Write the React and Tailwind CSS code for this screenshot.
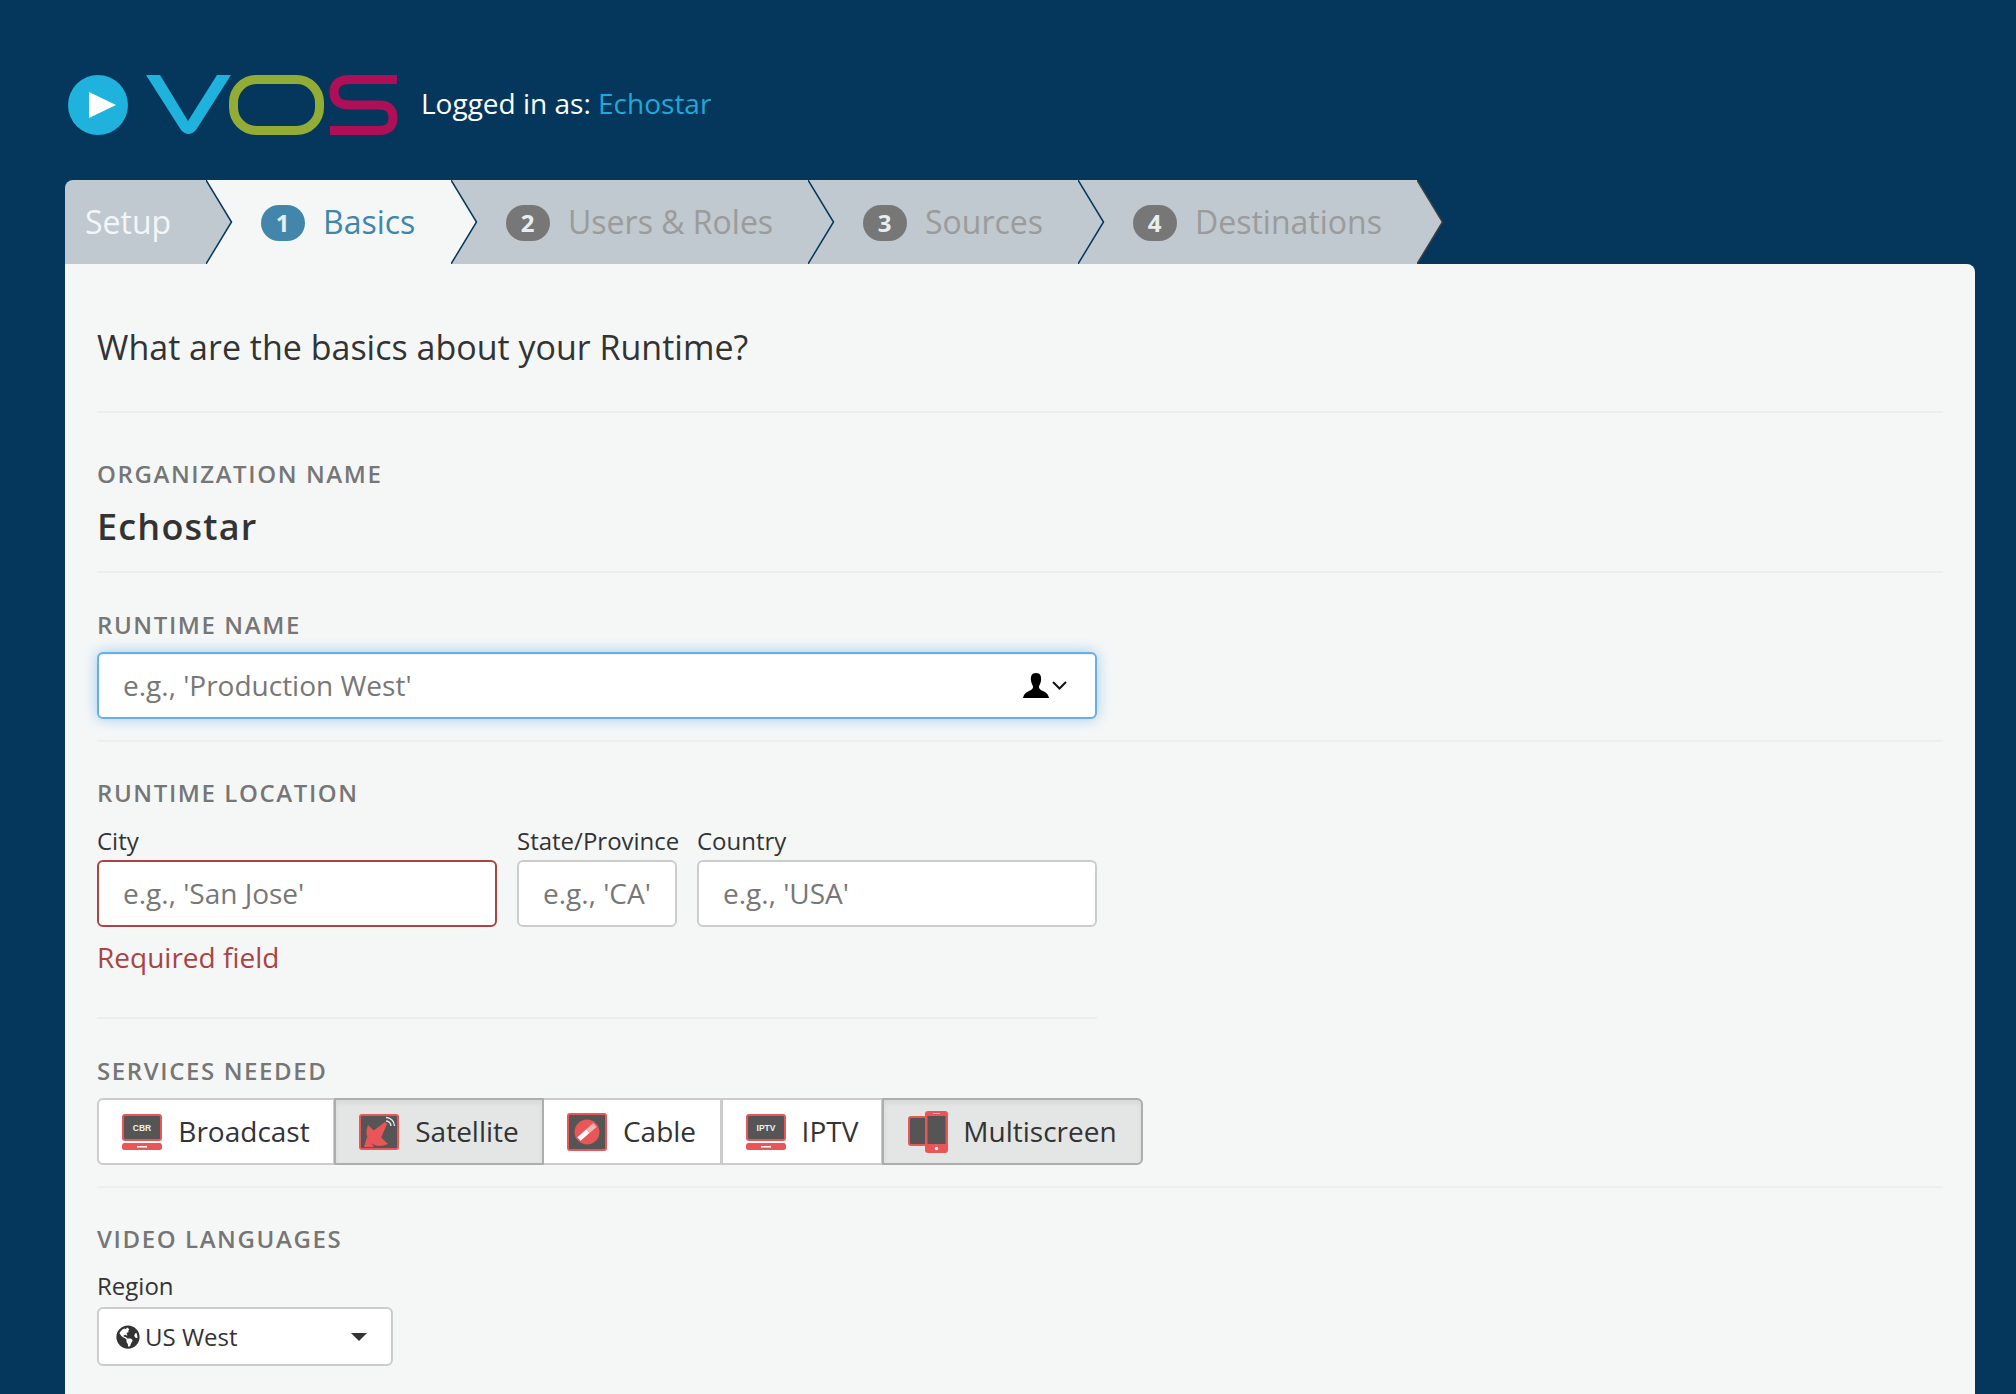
import { FaGlobeAmericas } from 'react-icons/fa'

const NAVY = '#04375b'

function Logo() {
  return (
    <svg width="330" height="60" viewBox="0 0 330 60" className="shrink-0">
      <circle cx="30" cy="30" r="30" fill="#1eb2dc" />
      <path d="M21 17 L48 30 L21 43 Z" fill="#fff" />
      <path d="M78 0 H92 L120 46 L149 0 H163 L128 55 Q120.500 63 113 55 Z" fill="#1eb2dc" />
      <rect x="165.500" y="4.500" width="86" height="51" rx="23" fill="none" stroke="#93ac36" strokeWidth="9" />
      <path d="M329 4.500 H282 Q266 4.500 266 17.500 Q266 30 282 30 H311 Q325 30 325 43 Q325 55.500 311 55.500 H262" fill="none" stroke="#ae0f57" strokeWidth="9" />
    </svg>
  )
}

function Tab({ width, number, label, active, last, first }) {
  const fill = active ? '#f5f7f7' : '#bfc9cf'
  return (
    <div
      className={`relative flex items-center h-full shrink-0 ${active ? 'bg-[#f5f7f7]' : 'bg-[#bfc9cf]'} ${first ? 'rounded-tl-lg pl-[20px]' : 'pl-[55px]'}`}
      style={{ width }}
    >
      {number ? (
        <span className={`flex items-center justify-center w-[44px] h-[36px] mt-[2px] pr-[1px] rounded-full text-[24px] font-bold text-[#e8edf0] ${active ? 'bg-[#4287ab]' : 'bg-[#777777]'}`}>
          {number}
        </span>
      ) : null}
      <span className={`text-[32px] leading-none ${number ? 'ml-[18px]' : ''} ${first ? 'text-[#f4f6f7]' : active ? 'text-[#3f86ab]' : 'text-[#9b9b9b]'}`}>
        {label}
      </span>
      <svg width="27" height="84" viewBox="0 0 27 84" className="absolute left-full top-0 z-10">
        <path d="M0 0 L25.500 42 L0 84 Z" fill={fill} />
        <path d="M0 0 L25.500 42 L0 84" fill="none" stroke={last ? '#3a3f42' : NAVY} strokeWidth="1.500" />
      </svg>
    </div>
  )
}

function SectionLabel({ children }) {
  return <div className="text-[24px] leading-[32px] font-semibold tracking-[1.6px] uppercase text-[#767676]">{children}</div>
}

function FieldLabel({ children }) {
  return <label className="block text-[24px] leading-[32px] text-[#333]">{children}</label>
}

function TextInput({ placeholder, className = '' }) {
  return (
    <input
      placeholder={placeholder}
      className={`block w-full h-[67px] px-[24px] pb-[2px] bg-white rounded-[6px] border-2 text-[28px] outline-none placeholder:text-[#777] ${className}`}
    />
  )
}

function ScreenIcon({ text }) {
  return (
    <svg width="40" height="36" viewBox="0 0 40 36">
      <rect x="1" y="1" width="38" height="25" rx="2" fill="#555" stroke="#ea5558" strokeWidth="2" />
      <text x="20" y="16.500" textAnchor="middle" fill="#eee" fontSize="8.500" fontWeight="700" fontFamily="'Liberation Sans', sans-serif">{text}</text>
      <rect x="0" y="29" width="40" height="7" rx="2.500" fill="#ea5558" />
      <rect x="15" y="32" width="10" height="1.500" fill="#fff" />
    </svg>
  )
}

function SatelliteIcon() {
  return (
    <svg width="40" height="36" viewBox="0 0 40 36">
      <rect x="1" y="1" width="38" height="34" rx="2" fill="#555" stroke="#ea5558" strokeWidth="2" />
      <path d="M9 11 L29 30 Q18 35 11 28 Q5 21 9 11 Z" fill="#ea5558" />
      <path d="M14 17 L26 8 L28 10 L22 24 Z" fill="#ea5558" />
      <path d="M8 23 L5 33 L15 33 Z" fill="#ea5558" />
      <path d="M27 3.500 A8.500 8.500 0 0 1 35.500 12 M27 7 A5 5 0 0 1 32 12" fill="none" stroke="#eee" strokeWidth="1.300" />
    </svg>
  )
}

function CableIcon() {
  return (
    <svg width="40" height="38" viewBox="0 0 40 38">
      <rect x="1" y="1" width="38" height="36" rx="2" fill="#555" stroke="#ea5558" strokeWidth="2" />
      <circle cx="20" cy="19" r="12.500" fill="#ea5558" />
      <path d="M12 26 L21 18" stroke="#fff" strokeWidth="5" />
      <path d="M21 18 L28 12" stroke="#f4b5b6" strokeWidth="5" />
    </svg>
  )
}

function MultiscreenIcon() {
  return (
    <svg width="40" height="42" viewBox="0 0 40 42">
      <rect x="1" y="6" width="20" height="28" rx="2" fill="#555" stroke="#ea5558" strokeWidth="2" />
      <rect x="17" y="0" width="23" height="42" rx="3" fill="#ea5558" />
      <rect x="19.500" y="5" width="18" height="28" fill="#555" />
      <rect x="25" y="2" width="7" height="1" fill="#f4b5b6" />
      <circle cx="28.500" cy="37.500" r="1.700" fill="#fff" />
    </svg>
  )
}

function ServiceButton({ icon, label, selected, className = '', gap = 'ml-[16px]', width }) {
  return (
    <button
      className={`flex items-center justify-center h-full text-[28px] text-[#333] border-2 ${selected ? 'bg-[#e4e5e5] border-[#adadad] shadow-[inset_0_3px_5px_rgba(0,0,0,.06)] z-10' : 'bg-white border-[#ccc]'} ${className}`}
      style={{ width }}
    >
      {icon}
      <span className={`-mt-[2px] ${gap}`}>{label}</span>
    </button>
  )
}

export default function App() {
  return (
    <div className="h-[1394px] overflow-hidden bg-[#04375b] font-['Open_Sans',sans-serif]">
      <header className="flex items-center pt-[75px] pl-[68px] h-[180px] pb-[45px]">
        <Logo />
        <div className="ml-[23px] -mt-[5px] text-[28px] text-white">
          Logged in as: <span className="text-[#1fa9d6]">Echostar</span>
        </div>
      </header>

      <nav className="flex ml-[65px] h-[84px]">
        <Tab first width="141px" label="Setup" />
        <Tab active width="245px" number="1" label="Basics" />
        <Tab width="357px" number="2" label="Users &amp; Roles" />
        <Tab width="270px" number="3" label="Sources" />
        <Tab last width="339px" number="4" label="Destinations" />
      </nav>

      <main className="ml-[65px] w-[1910px] h-[1130px] px-[32px] bg-[#f5f7f7] rounded-tr-lg">
        <section className="h-[149px] pt-[60px] border-b-2 border-[#eceeee]">
          <h1 className="text-[34px] leading-[46px] text-[#333]">What are the basics about your Runtime?</h1>
        </section>

        <section className="h-[160px] pt-[45px] border-b-2 border-[#eceeee]">
          <SectionLabel>Organization Name</SectionLabel>
          <div className="mt-[15px] text-[36px] leading-[44px] font-semibold tracking-[1.2px] text-[#333]">Echostar</div>
        </section>

        <section className="h-[169px] pt-[36px] border-b-2 border-[#eceeee]">
          <SectionLabel>Runtime Name</SectionLabel>
          <div className="relative w-[1000px] mt-[11px]">
            <TextInput placeholder="e.g., 'Production West'" className="border-[#66afe9] shadow-[inset_0_1px_1px_rgba(0,0,0,.075),0_0_14px_rgba(102,175,233,.6)]" />
            <div className="absolute right-[30px] top-[21px] flex items-center">
              <svg width="26" height="25" viewBox="0 0 26 25">
                <path d="M13 0 C8.500 0 7.500 3.500 8 7.500 C8.400 10.500 9.500 12 10 13.500 C10.300 16 8 17 5 18.500 C2 20 0.500 22 0 25 H26 C25.500 22 24 20 21 18.500 C18 17 15.700 16 16 13.500 C16.500 12 17.600 10.500 18 7.500 C18.500 3.500 17.500 0 13 0 Z" fill="#000" />
              </svg>
              <svg width="15" height="9" viewBox="0 0 15 9" className="ml-[3px]">
                <path d="M1 1 L7.500 7.500 L14 1" fill="none" stroke="#111" strokeWidth="2" />
              </svg>
            </div>
          </div>
        </section>

        <section className="h-[277px] pt-[35px]">
          <SectionLabel>Runtime Location</SectionLabel>
          <div className="flex gap-[20px] w-[1000px] mt-[16px]">
            <div className="w-[400px]">
              <FieldLabel>City</FieldLabel>
              <TextInput placeholder="e.g., 'San Jose'" className="border-[#a94442] mt-[3px]" />
              <div className="mt-[13px] text-[28px] leading-[34px] text-[#a94442]">Required field</div>
            </div>
            <div className="w-[160px]">
              <FieldLabel><span className="whitespace-nowrap">State/Province</span></FieldLabel>
              <TextInput placeholder="e.g., 'CA'" className="border-[#ccc] mt-[3px]" />
            </div>
            <div className="w-[400px]">
              <FieldLabel>Country</FieldLabel>
              <TextInput placeholder="e.g., 'USA'" className="border-[#ccc] mt-[3px]" />
            </div>
          </div>
          <div className="w-[1000px] mt-[43px] border-b-2 border-[#eceeee]" />
        </section>

        <section className="h-[169px] pt-[36px] border-b-2 border-[#eceeee]">
          <SectionLabel>Services Needed</SectionLabel>
          <div className="flex h-[67px] mt-[11px]">
            <ServiceButton width="238px" className="rounded-l-[6px]" icon={<ScreenIcon text="CBR" />} label="Broadcast" gap="ml-[16px]" />
            <ServiceButton width="210px" selected className="-ml-[1px]" icon={<SatelliteIcon />} label="Satellite" />
            <ServiceButton width="179px" className="-ml-[1px] border-l-0" icon={<CableIcon />} label="Cable" gap="ml-[16px]" />
            <ServiceButton width="162px" className="-ml-[1px]" icon={<ScreenIcon text="IPTV" />} label="IPTV" />
            <ServiceButton width="261px" selected className="-ml-[1px] rounded-r-[6px]" icon={<MultiscreenIcon />} label="Multiscreen" gap="ml-[15px]" />
          </div>
        </section>

        <section className="pt-[35px]">
          <SectionLabel>Video Languages</SectionLabel>
          <div className="mt-[15px]">
            <FieldLabel>Region</FieldLabel>
            <div className="flex items-center w-[296px] h-[59px] mt-[5px] pl-[17px] pr-[24px] bg-white rounded-[6px] border-2 border-[#ccc] text-[24px] text-[#333]">
              <FaGlobeAmericas className="w-[24px] h-[24px] text-[#333]" />
              <span className="ml-[5px]">US West</span>
              <span className="ml-auto w-0 h-0 border-x-[8px] border-x-transparent border-t-[8px] border-t-[#333]" />
            </div>
          </div>
        </section>
      </main>
    </div>
  )
}
